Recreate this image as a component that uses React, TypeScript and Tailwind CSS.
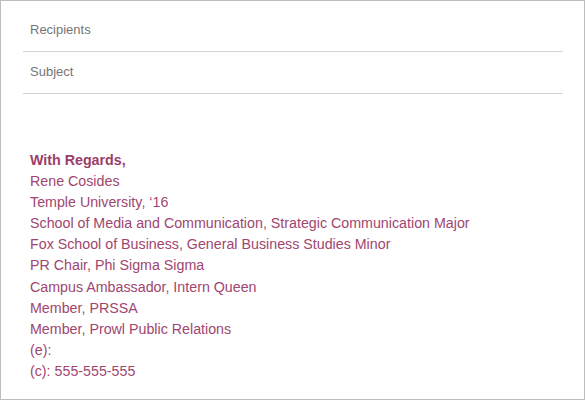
import React from 'react';

const lines = [
  'Rene Cosides',
  'Temple University, ‘16',
  'School of Media and Communication, Strategic Communication Major',
  'Fox School of Business, General Business Studies Minor',
  'PR Chair, Phi Sigma Sigma',
  'Campus Ambassador, Intern Queen',
  'Member, PRSSA',
  'Member, Prowl Public Relations',
  '(e):',
  '(c): 555-555-555',
];

export default function App() {
  return (
    <div
      className="w-[585px] h-[400px] border border-[#bdbdbd] bg-white pl-[22px] pr-[21px]"
      style={{ fontFamily: '"Liberation Sans", Arial, sans-serif' }}
    >
      <div className="h-[51px] border-b border-[#d4d4d4] flex items-center pl-[7px] pt-[8px] text-[13px] text-[#757575]">
        Recipients
      </div>
      <div className="h-[42px] border-b border-[#d4d4d4] flex items-center pl-[7px] pb-[1px] text-[13px] text-[#757575]">
        Subject
      </div>
      <div className="pt-[56px] pl-[7px] text-[14.25px] leading-[21.1px] text-[#a0466f]">
        <div className="font-bold text-[#9a3d69]">With Regards,</div>
        {lines.map((l) => (
          <div key={l}>{l}</div>
        ))}
      </div>
    </div>
  );
}
